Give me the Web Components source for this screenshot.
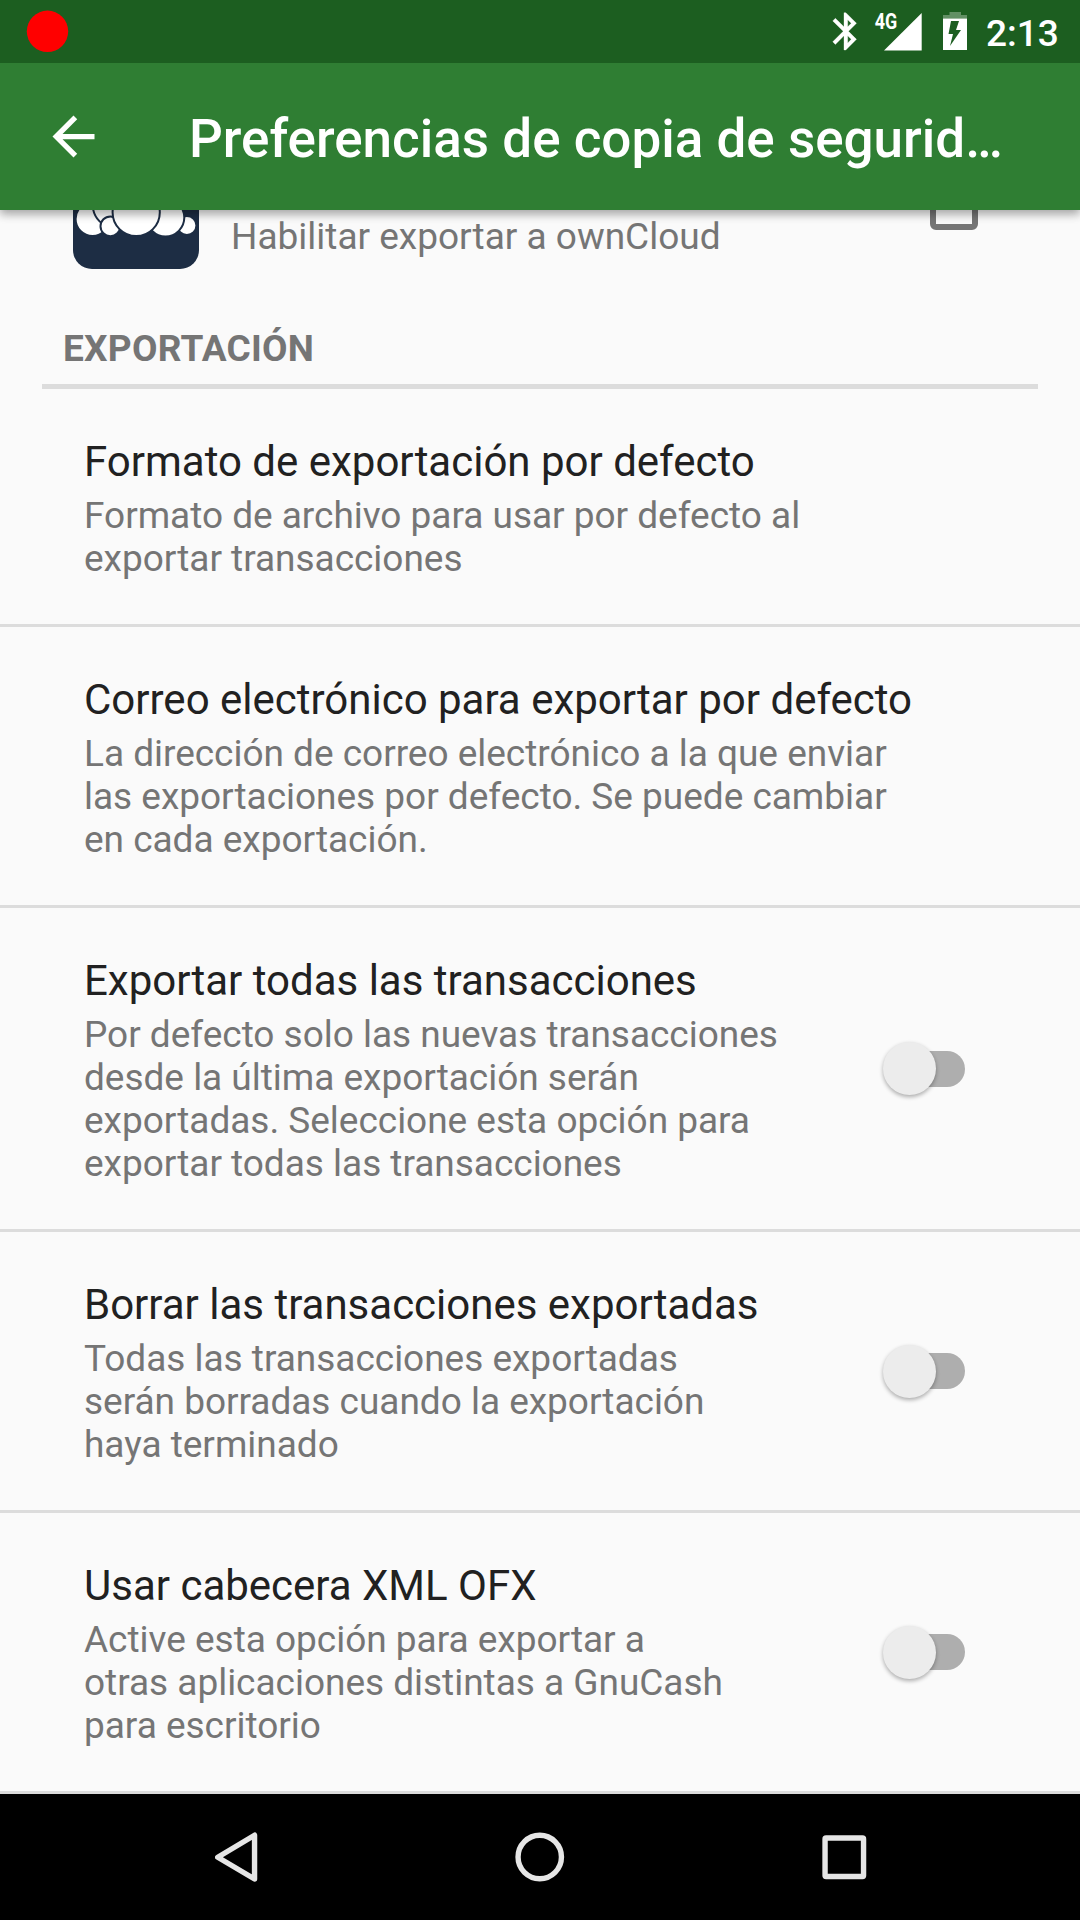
<!DOCTYPE html>
<html lang="es">
<head>
<meta charset="utf-8">
<title>Preferencias de copia de seguridad</title>
<style>
html,body{margin:0;padding:0}
body{font-family:Roboto,sans-serif;background:#fafafa}
</style>
</head>
<body>
<phone-screen>
  <status-bar slot="top">2:13</status-bar>
  <app-bar slot="top">Preferencias de copia de segurid…</app-bar>
  <cloud-row>Habilitar exportar a ownCloud</cloud-row>
  <section-head>EXPORTACIÓN</section-head>
  <pref-row heading="Formato de exportación por defecto">Formato de archivo para usar por defecto al<br>exportar transacciones</pref-row>
  <pref-row heading="Correo electrónico para exportar por defecto">La dirección de correo electrónico a la que enviar<br>las exportaciones por defecto. Se puede cambiar<br>en cada exportación.</pref-row>
  <pref-row heading="Exportar todas las transacciones">Por defecto solo las nuevas transacciones<br>desde la última exportación serán<br>exportadas. Seleccione esta opción para<br>exportar todas las transacciones<toggle-switch slot="widget"></toggle-switch></pref-row>
  <pref-row heading="Borrar las transacciones exportadas">Todas las transacciones exportadas<br>serán borradas cuando la exportación<br>haya terminado<toggle-switch slot="widget"></toggle-switch></pref-row>
  <pref-row heading="Usar cabecera XML OFX">Active esta opción para exportar a<br>otras aplicaciones distintas a GnuCash<br>para escritorio<toggle-switch slot="widget"></toggle-switch></pref-row>
  <nav-bar slot="bottom"></nav-bar>
</phone-screen>
<script>
const define = (name, html) => customElements.define(name, class extends HTMLElement {
  constructor() {
    super();
    const root = this.attachShadow({mode: 'open'});
    root.innerHTML = html;
    const h = root.querySelector('.heading');
    if (h) h.textContent = this.getAttribute('heading');
  }
});

define('phone-screen', `<style>
:host{display:flex;flex-direction:column;width:1080px;height:1920px;overflow:hidden;background:#fafafa}
.top{flex:none;z-index:1;box-shadow:0 3px 10px rgba(0,0,0,.28),0 5px 8px rgba(0,0,0,.12)}
.list{flex:1;min-height:0;overflow:hidden}
</style><div class="top"><slot name="top"></slot></div><div class="list"><slot></slot></div><slot name="bottom"></slot>`);

define('status-bar', `<style>
:host{display:flex;align-items:flex-start;height:63px;background:#1c5e20;color:#fff;font-size:37px;font-weight:500;line-height:43px}
svg{display:block;flex:none}
.gap{flex:1}
.time{width:94px;padding-top:12px;box-sizing:border-box}
</style>
<svg width="80" height="63"><circle cx="47.5" cy="31.3" r="20.7" fill="#f00"/></svg>
<span class="gap"></span>
<svg width="38" height="63" viewBox="828 0 38 63"><path transform="translate(823.4 8.9) scale(1.87)" d="M17.71 7.71L12 2h-1v7.59L6.41 5 5 6.41 10.59 12 5 17.59 6.41 19 11 14.41V22h1l5.71-5.71-4.3-4.29 4.3-4.29zM13 5.83l1.88 1.88L13 9.59V5.83zm1.88 10.46L13 18.17v-3.76l1.88 1.88z" fill="#fff" stroke="#fff" stroke-width=".15"/></svg>
<svg width="64" height="63" viewBox="866 0 64 63" fill="#fff"><path d="M921.7 13 V50.5 H884 Z"/><text x="874.7" y="29.4" font-size="21.5" font-weight="700" textLength="22.5" lengthAdjust="spacingAndGlyphs">4G</text></svg>
<svg width="56" height="63" viewBox="930 0 56 63"><path d="M943 18.5 V15 H949.5 V12 H961 V15 H967 V18.5 Z" fill="#629064"/><path d="M943 18.5 H967 V50 H943 Z" fill="#fff"/><path d="M951 21 H959 L956 30 H961 L950 46 L953 34 H948.5 Z" fill="#1c5e20"/></svg>
<span class="time"><slot></slot></span>`);

define('app-bar', `<style>
:host{display:flex;height:147px;background:#2f7e33;color:#fff;font-size:53px;font-weight:500;line-height:62px}
svg{flex:none;margin:42px 79px 0 42px}
.t{padding-top:45px;white-space:nowrap}
</style><svg width="68" height="63" viewBox="0 0 24 24" preserveAspectRatio="xMinYMin meet" fill="#fff"><path d="M20 11H7.83l5.59-5.59L12 4l-8 8 8 8 1.41-1.41L7.83 13H20z"/></svg><span class="t"><slot></slot></span>`);

define('cloud-row', `<style>
:host{display:flex;align-items:center;height:172px;margin-top:-90px;padding:0 102px 0 73px;font-size:37px;line-height:43px;color:#757575}
svg{flex:none}
.t{flex:1;padding:60px 0 0 32px}
.box{box-sizing:border-box;width:48px;height:48px;border:6px solid #757575;border-radius:6px}
</style>
<svg width="126" height="126" viewBox="73 143 126 126"><rect x="73" y="143" width="126" height="126" rx="19" fill="#1d2d44"/>
<g fill="#fff" stroke="#1d2d44" stroke-width="2"><circle cx="92.6" cy="219" r="17"/><circle cx="186.9" cy="225.6" r="9.5"/><circle cx="165.5" cy="217.6" r="18.8"/><circle cx="116" cy="205" r="23.2"/><circle cx="110.4" cy="226.3" r="9.9"/><circle cx="136.2" cy="212.4" r="23.6"/></g></svg>
<span class="t"><slot></slot></span><div class="box"></div>`);

define('section-head', `<style>
:host{display:block;box-sizing:border-box;height:97px;margin:0 42px;padding:35px 21px 0;border-bottom:5px solid #dcdcdc;font-size:37px;font-weight:700;line-height:43px;letter-spacing:.25px;color:#757575}
</style><slot></slot>`);

define('pref-row', `<style>
:host{display:flex;align-items:center;padding:48px 114px 44px 84px;border-bottom:3px solid #dcdcdc}
.body{flex:1}
.heading{font-size:42px;line-height:49px;color:#212121;white-space:nowrap}
.sum{padding-top:8px;font-size:37px;line-height:43px;letter-spacing:-.02px;color:#757575;white-space:nowrap}
.w{display:flex;align-items:center;height:0;margin-top:-4px}
</style><div class="body"><div class="heading"></div><div class="sum"><slot></slot></div></div><div class="w"><slot name="widget"></slot></div>`);

define('toggle-switch', `<style>
:host{display:flex;align-items:center;width:84px;height:54px}
.track{display:flex;align-items:center;width:71px;height:36px;margin-left:12px;border-radius:18px;background:#aeaeae}
.thumb{flex:none;width:53px;height:53px;margin-left:-11.5px;border-radius:50%;background:#ececec;box-shadow:0 2px 4px rgba(0,0,0,.32)}
</style><div class="track"><div class="thumb"></div></div>`);

define('nav-bar', `<style>
:host{display:flex;align-items:center;justify-content:center;height:126px;background:#000}
svg{flex:none;width:303.5px;height:126px;fill:none;stroke:#e6e6e6;stroke-width:5.4}
</style>
<svg viewBox="84.75 1794 303.5 126"><path d="M254.3 1835.2 V1879 L217.5 1857.2 Z" stroke-linejoin="round"/></svg>
<svg viewBox="388.25 1794 303.5 126"><circle cx="540" cy="1857" r="21.7"/></svg>
<svg viewBox="691.75 1794 303.5 126"><rect x="824.8" y="1838" width="38.5" height="38.5" rx="1"/></svg>`);
</script>
</body>
</html>
